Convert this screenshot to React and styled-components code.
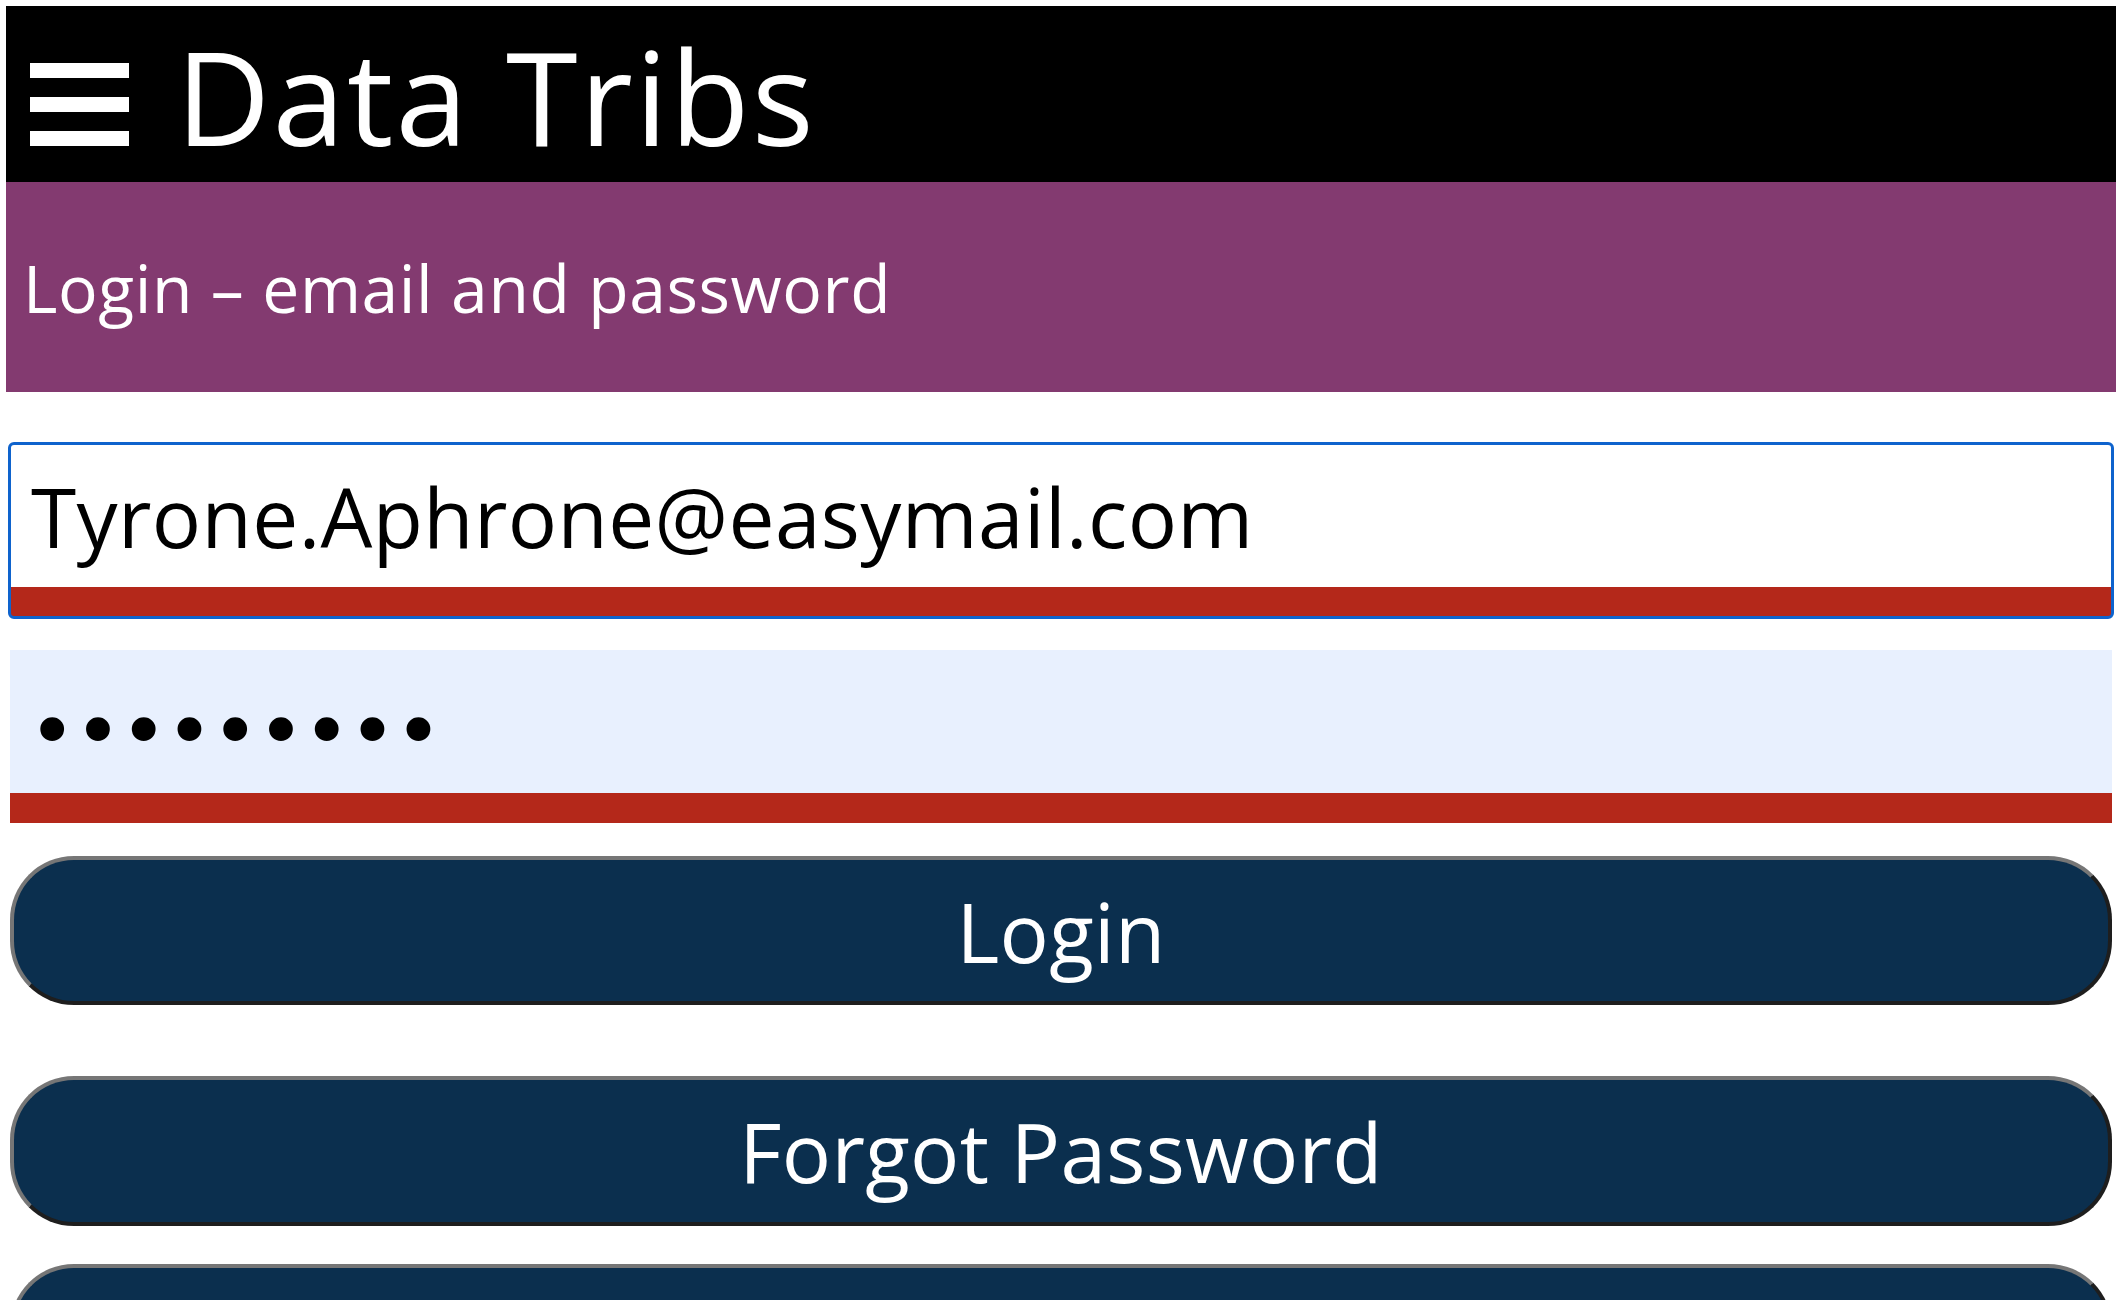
import React from "react";
import styled, { createGlobalStyle } from "styled-components";

const GlobalStyle = createGlobalStyle`
  html, body {
    margin: 0;
    padding: 0;
    background: #ffffff;
    font-family: "Open Sans", "Liberation Sans", sans-serif;
  }
  * { box-sizing: border-box; }
`;

const Page = styled.div`
  padding: 6px 8px 0 6px;
`;

const TopBar = styled.header`
  display: flex;
  align-items: center;
  gap: 47px;
  height: 176px;
  padding-left: 24px;
  background: #000000;
`;

const MenuIcon = styled.svg`
  align-self: flex-end;
  margin-bottom: 36px;
  flex: none;
`;

const Brand = styled.div`
  color: #ffffff;
  font-size: 130px;
  line-height: 1;
  letter-spacing: 2.2px;
  padding-top: 3px;
  white-space: nowrap;
`;

const Banner = styled.section`
  display: flex;
  align-items: center;
  height: 210px;
  padding-left: 17px;
  background: #833a70;
`;

const BannerTitle = styled.h1`
  margin: 0;
  color: #ffffff;
  font-size: 66px;
  font-weight: 400;
  line-height: 1;
  letter-spacing: 0.6px;
  white-space: nowrap;
`;

const Form = styled.form`
  display: flex;
  flex-direction: column;
  padding: 52px 4px 0 4px;
`;

const Field = styled.input`
  display: block;
  width: 100%;
  height: 173px;
  margin: 0 0 ${(p) => p.$after}px 0;
  padding: ${(p) => (p.$mask ? "19px 0 0 18px" : "0 0 0 21px")};
  border: none;
  border-bottom: 30px solid #b4281a;
  border-radius: ${(p) => (p.$focused ? "4px" : "0")};
  background: ${(p) => (p.$autofill ? "#e8f0fe" : "#ffffff")};
  color: #000000;
  font-family: ${(p) => (p.$mask ? '"DejaVu Sans", sans-serif' : '"Open Sans", sans-serif')};
  font-size: 82px;
  letter-spacing: ${(p) => (p.$mask ? "-2.6px" : "0.37px")};
  outline: ${(p) => (p.$focused ? "3px solid #0e63cd" : "none")};
  outline-offset: -1px;
`;

const ActionButton = styled.button`
  display: block;
  width: 100%;
  height: ${(p) => p.$h}px;
  margin: 0 0 ${(p) => p.$after}px 0;
  padding: 0;
  border-style: solid;
  border-width: 4px;
  border-color: #767676 #1e1e1e #1e1e1e #767676;
  border-radius: 64px;
  background: #0b2f4e;
  color: #ffffff;
  font-family: "Open Sans", sans-serif;
  font-size: 82px;
  line-height: 1;
  letter-spacing: 0.3px;
  cursor: pointer;
`;

export default function App() {
  return (
    <>
      <GlobalStyle />
      <Page>
        <TopBar>
          <MenuIcon width="99" height="83" viewBox="0 0 99 83" aria-label="menu">
            <rect x="0" y="0" width="99" height="15" fill="#ffffff" />
            <rect x="0" y="34" width="99" height="15" fill="#ffffff" />
            <rect x="0" y="68" width="99" height="15" fill="#ffffff" />
          </MenuIcon>
          <Brand>Data Tribs</Brand>
        </TopBar>
        <Banner>
          <BannerTitle>Login – email and password</BannerTitle>
        </Banner>
        <Form onSubmit={(e) => e.preventDefault()}>
          <Field
            type="email"
            defaultValue="Tyrone.Aphrone@easymail.com"
            $focused
            $after={33}
          />
          <Field
            type="password"
            defaultValue="123456789"
            $autofill
            $mask
            $after={33}
          />
          <ActionButton type="submit" $h={149} $after={71}>Login</ActionButton>
          <ActionButton type="button" $h={150} $after={38}>Forgot Password</ActionButton>
          <ActionButton type="button" $h={150} $after={30}>Sign Up</ActionButton>
        </Form>
      </Page>
    </>
  );
}
